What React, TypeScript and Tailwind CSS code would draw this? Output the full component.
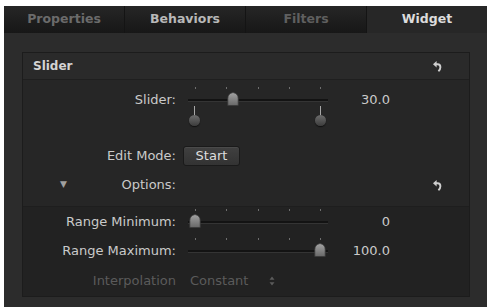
import type { ReactNode } from 'react';

const tabs = [
  { label: 'Properties', tone: 'text-[#6b6b6b]' },
  { label: 'Behaviors', tone: 'text-[#b8b8b8]' },
  { label: 'Filters', tone: 'text-[#5f5f5f]' },
  { label: 'Widget', tone: 'text-[#dcdcdc]', active: true },
];

const tickClasses = ['left-[7px]', 'left-[38px]', 'left-[70px]', 'left-[101px]', 'left-[132px]'];

function ResetIcon() {
  return (
    <svg width="9" height="11" viewBox="0 0 9 11" className="text-[#cfcfcf]">
      <path d="M0 3.2 L3.6 0 L3.6 6.4 Z" fill="currentColor" />
      <path d="M3 3.2 H4.6 Q7.4 3.2 7.4 6.2 Q7.4 8.4 5.4 10.2" fill="none" stroke="currentColor" strokeWidth="1.9" />
    </svg>
  );
}

function Thumb() {
  return (
    <svg width="12" height="14" viewBox="0 0 12 14">
      <defs>
        <linearGradient id="thumbFill" x1="0" y1="0" x2="0" y2="1">
          <stop offset="0" stopColor="#a3a3a3" />
          <stop offset="1" stopColor="#686868" />
        </linearGradient>
      </defs>
      <path d="M0.8 13.5 V6.5 Q0.8 1.6 6 0.5 Q11.2 1.6 11.2 6.5 V13.5 Z" fill="url(#thumbFill)" stroke="#3a3a3a" strokeWidth="0.8" />
    </svg>
  );
}

function Slider({ value, pins }: { value: number; pins?: boolean }) {
  const x = 7 + (value / 100) * 125;
  return (
    <div className="relative h-[28px] w-[140px]">
      {tickClasses.map((cls) => (
        <span key={cls} className={`absolute top-[1px] h-[2px] w-px bg-[#6e6e6e] ${cls}`} />
      ))}
      <div className="absolute left-0 right-0 top-[13px] h-[3px] border-b border-[#343434] bg-[#131313]" />
      <div className="absolute top-[6px] -ml-[6px]" style={{ left: x }}>
        <Thumb />
      </div>
      {pins && (
        <>
          {['left-[6px]', 'left-[132px]'].map((cls) => (
            <div key={cls} className={`absolute top-[20px] flex -ml-[5px] w-[11px] flex-col items-center ${cls}`}>
              <span className="h-[9px] w-px bg-[#a8a8a8]" />
              <span className="h-[11px] w-[11px] rounded-full bg-gradient-to-b from-[#6e6e6e] to-[#3c3c3c] shadow-[0_1px_1px_#111]" />
            </div>
          ))}
        </>
      )}
    </div>
  );
}

function Row({ label, className, children, dim }: { label: ReactNode; className: string; children?: ReactNode; dim?: boolean }) {
  return (
    <div className={`flex items-center ${className}`}>
      <div className={`w-[153px] text-right ${dim ? 'text-[#5b5b5b]' : 'text-[#cacaca]'}`}>{label}</div>
      {children}
    </div>
  );
}

export default function App() {
  return (
    <div className="h-[307px] w-[487px] overflow-hidden bg-white pl-[4px] pt-[6px] font-['DejaVu_Sans',sans-serif] text-[13px]">
      <div className="flex h-full flex-col bg-[#2c2c2c]">
        <div className="flex h-[27px] bg-gradient-to-b from-[#262626] to-[#171717]">
          {tabs.map((tab, i) => (
            <div
              key={tab.label}
              className={`flex flex-1 items-center justify-center text-[12.5px] font-bold ${tab.tone} ${
                i > 0 ? 'border-l border-[#141414]' : ''
              } ${tab.active ? 'bg-[#272727]' : ''}`}
            >
              {tab.label}
            </div>
          ))}
        </div>

        <div className="pl-[18px] pt-[19px]">
          <div className="w-[448px] border border-[#1c1c1c] bg-[#262626]">
            <div className="flex h-[27px] items-center justify-between border-b border-[#1f1f1f] bg-[#2a2a2a] pl-[10px] pr-[27px]">
              <span className="text-[12px] font-bold text-[#d4d4d4]">Slider</span>
              <ResetIcon />
            </div>

            <Row label="Slider:" className="h-[40px]">
              <div className="ml-[12px]">
                <Slider value={30} pins />
              </div>
              <div className="w-[62px] text-right text-[#cacaca]">30.0</div>
            </Row>
            <div className="h-[22px]" />

            <Row label="Edit Mode:" className="h-[28px]">
              <button className="ml-[7px] flex h-[20px] w-[57px] items-center justify-center rounded-[3px] border border-[#1a1a1a] bg-gradient-to-b from-[#404040] to-[#333333] text-[#dedede] shadow-[inset_0_1px_0_#4a4a4a]">
                Start
              </button>
            </Row>

            <div className="mb-[6px] flex h-[30px] items-center pr-[27px]">
              <div className="flex w-[153px] items-center">
                <span className="ml-[37px] text-[9px] text-[#a0a0a0]">▼</span>
                <span className="flex-1 text-right text-[#cacaca]">Options:</span>
              </div>
              <div className="flex-1" />
              <ResetIcon />
            </div>

            <div className="border-t border-[#1e1e1e] bg-[#222222]">
              <Row label="Range Minimum:" className="h-[30px]">
                <div className="ml-[12px]">
                  <Slider value={0} />
                </div>
                <div className="w-[62px] text-right text-[#cacaca]">0</div>
              </Row>
              <Row label="Range Maximum:" className="h-[28px]">
                <div className="ml-[12px]">
                  <Slider value={100} />
                </div>
                <div className="w-[62px] text-right text-[#cacaca]">100.0</div>
              </Row>
              <Row label="Interpolation" className="h-[31px]" dim>
                <span className="ml-[14px] text-[#5b5b5b]">Constant</span>
                <svg width="6" height="10" viewBox="0 0 6 10" className="ml-[21px] text-[#5b5b5b]">
                  <path d="M3 0.5 L5.5 3.8 H0.5 Z M3 9.5 L5.5 6.2 H0.5 Z" fill="currentColor" />
                </svg>
              </Row>
            </div>
          </div>
        </div>
      </div>
    </div>
  );
}
